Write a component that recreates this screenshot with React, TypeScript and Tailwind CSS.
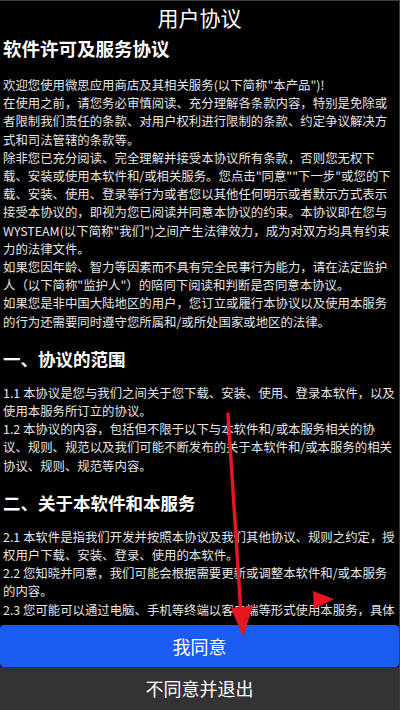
import React from 'react';

const FONT = { fontFamily: '"Noto Sans CJK SC", "Noto Sans", sans-serif' };

type Block =
  | { kind: 'p'; lines: string[] }
  | { kind: 'h'; text: string };

const blocks: Block[] = [
  {
    kind: 'p',
    lines: [
      '欢迎您使用微思应用商店及其相关服务(以下简称"本产品")!',
      '在使用之前，请您务必审慎阅读、充分理解各条款内容，特别是免除或',
      '者限制我们责任的条款、对用户权利进行限制的条款、约定争议解决方',
      '式和司法管辖的条款等。',
      '除非您已充分阅读、完全理解并接受本协议所有条款，否则您无权下',
      '载、安装或使用本软件和/或相关服务。您点击"同意""下一步"或您的下',
      '载、安装、使用、登录等行为或者您以其他任何明示或者默示方式表示',
      '接受本协议的，即视为您已阅读并同意本协议的约束。本协议即在您与',
      'WYSTEAM(以下简称"我们")之间产生法律效力，成为对双方均具有约束',
      '力的法律文件。',
      '如果您因年龄、智力等因素而不具有完全民事行为能力，请在法定监护',
      '人（以下简称"监护人"）的陪同下阅读和判断是否同意本协议。',
      '如果您是非中国大陆地区的用户，您订立或履行本协议以及使用本服务',
      '的行为还需要同时遵守您所属和/或所处国家或地区的法律。',
    ],
  },
  { kind: 'h', text: '一、协议的范围' },
  {
    kind: 'p',
    lines: [
      '1.1 本协议是您与我们之间关于您下载、安装、使用、登录本软件，以及',
      '使用本服务所订立的协议。',
      '1.2 本协议的内容，包括但不限于以下与本软件和/或本服务相关的协',
      '议、规则、规范以及我们可能不断发布的关于本软件和/或本服务的相关',
      '协议、规则、规范等内容。',
    ],
  },
  { kind: 'h', text: '二、关于本软件和本服务' },
  {
    kind: 'p',
    lines: [
      '2.1 本软件是指我们开发并按照本协议及我们其他协议、规则之约定，授',
      '权用户下载、安装、登录、使用的本软件。',
      '2.2 您知晓并同意，我们可能会根据需要更新或调整本软件和/或本服务',
      '的内容。',
      '2.3 您可能可以通过电脑、手机等终端以客户端等形式使用本服务，具体',
    ],
  },
];

export default function App() {
  return (
    <div
      className="relative flex flex-col w-[400px] h-[710px] bg-black overflow-hidden border-t border-r border-[#3d3d3d]"
      style={FONT}
    >
      {/* 标题栏 */}
      <div className="h-[34px] shrink-0 flex items-center justify-center text-[21px] text-white">
        用户协议
      </div>

      {/* 协议正文 */}
      <div className="flex-1 overflow-hidden px-[3px]">
        <h1 className="text-[18.5px] leading-[26px] font-bold text-white">软件许可及服务协议</h1>
        <div className="mt-[15px]">
          {blocks.map((b, i) =>
            b.kind === 'h' ? (
              <h2 key={i} className="mt-4 mb-[13px] text-[17.5px] leading-[24px] font-bold text-white">
                {b.text}
              </h2>
            ) : (
              <div key={i} className="text-[12.4px] leading-[18.2px] text-[#e6e6e6]">
                {b.lines.map((l, j) => (
                  <div key={j} className="whitespace-nowrap">{l}</div>
                ))}
              </div>
            )
          )}
        </div>
      </div>

      {/* 底部按钮 */}
      <button className="h-[42px] shrink-0 rounded-[4px] bg-[#1b5cf2] text-[18px] text-white">
        我同意
      </button>
      <button className="h-[43px] shrink-0 bg-[#333333] text-[18px] text-white">
        不同意并退出
      </button>

      {/* 红色标注箭头 */}
      <svg className="absolute inset-0 pointer-events-none" width="400" height="710" viewBox="0 0 400 710">
        <line x1="228" y1="413" x2="241" y2="612" stroke="#e5161f" strokeWidth="3.5" strokeLinecap="round" />
        <polygon points="231,607 253,605 243,636" fill="#e5161f" />
        <polygon points="313,590 334,598 314,608" fill="#e5161f" />
      </svg>
    </div>
  );
}
